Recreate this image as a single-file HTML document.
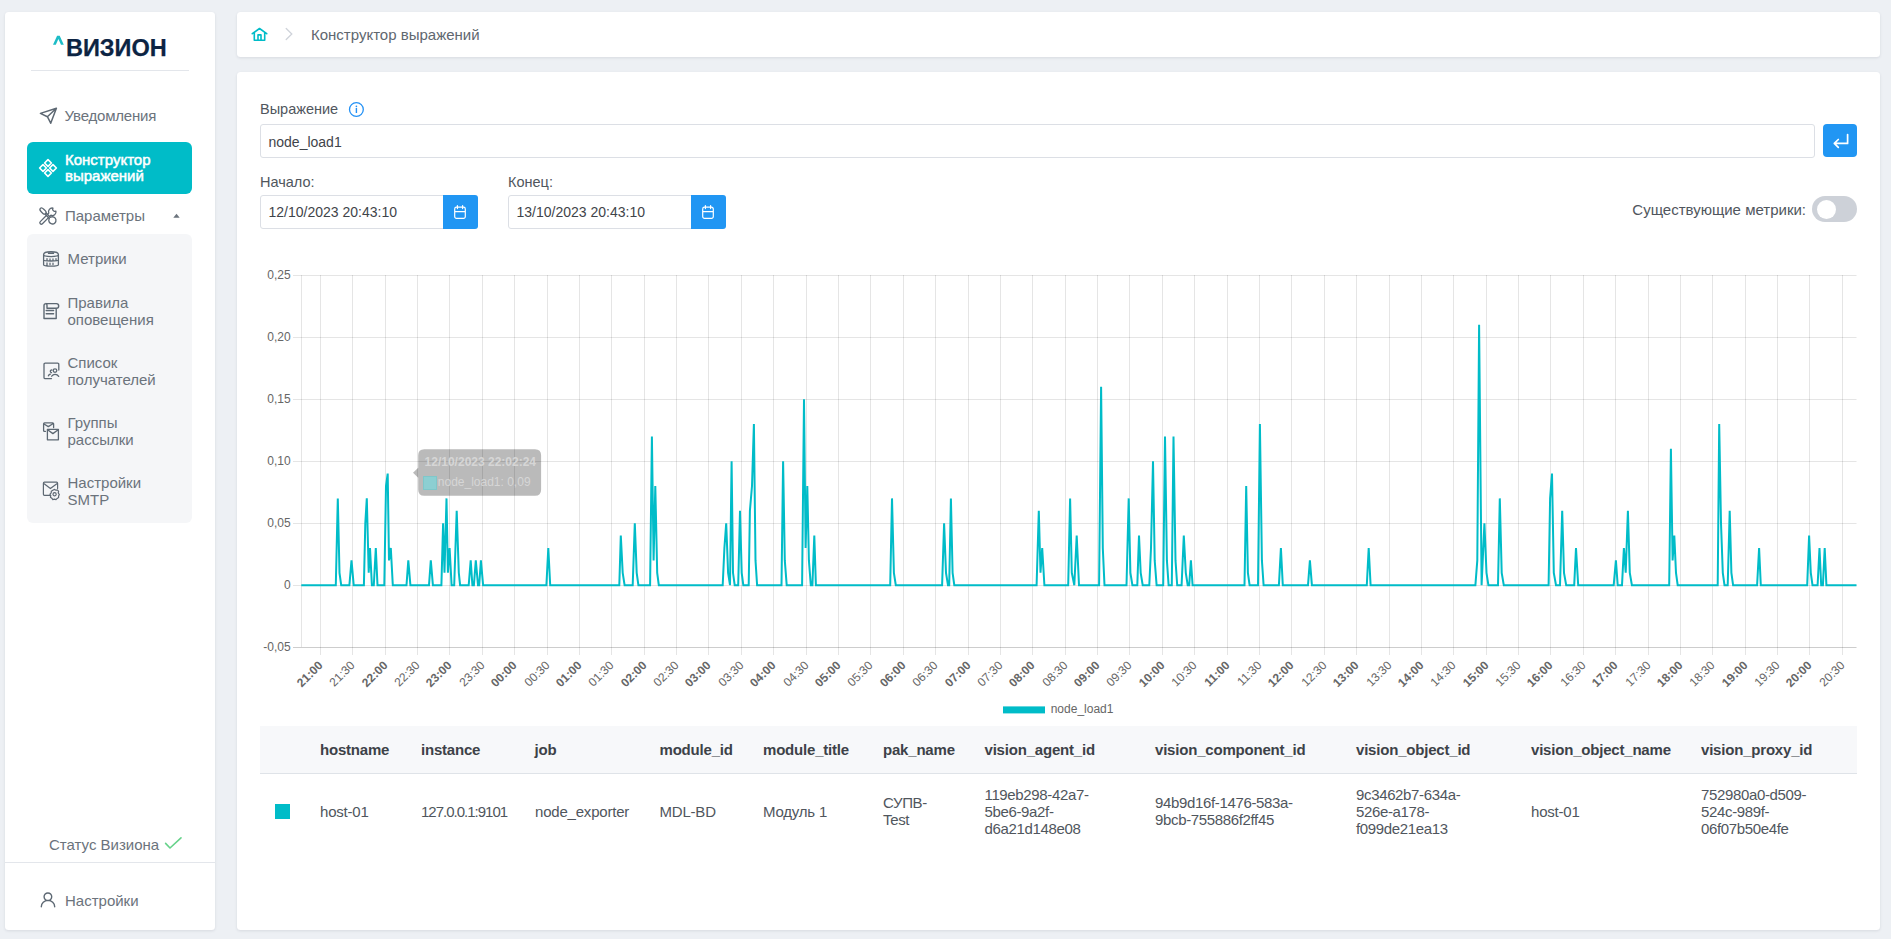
<!DOCTYPE html>
<html><head><meta charset="utf-8"><title>Конструктор выражений</title>
<style>
*{box-sizing:border-box}
html,body{margin:0;padding:0}
body{width:1891px;height:939px;overflow:hidden;background:#edf0f4;position:relative;font-family:"Liberation Sans", sans-serif}
.card{position:absolute;background:#fff;border-radius:3.5px;box-shadow:0 1px 3px rgba(20,30,50,0.10)}
.t{position:absolute;white-space:nowrap}
.abs{position:absolute}
svg.chart{position:absolute;left:0;top:0}
.cl{font-family:"Liberation Sans", sans-serif;font-size:12px;fill:#666}
.cl.b{font-weight:700}
</style></head>
<body>
<div class="card" style="left:5px;top:12px;width:210px;height:918px"></div>
<div class="card" style="left:237px;top:12px;width:1643px;height:45px"></div>
<div class="card" style="left:237px;top:72px;width:1643px;height:858px"></div>
<svg class="abs" style="left:50px;top:33px" width="16" height="14" viewBox="50 33 16 14"><path d="M53 44.8L57.1 35.7H59.7L63.8 44.8H61L58.4 38.9L55.8 44.8Z" fill="#1cbcc6"/></svg>
<div class="t" style="left:66px;top:33.65px;font-size:23.5px;line-height:28px;color:#0c2443;font-weight:700;letter-spacing:0px;-webkit-text-stroke:0.25px #0c2443">ВИЗИОН</div>
<div class="abs" style="left:31px;top:70px;width:158px;height:1px;background:#e3e6eb"></div>
<svg class="abs" style="left:36px;top:102px" width="26" height="26" viewBox="36 102 26 26"><path d="M40.4 113.4L56.4 108.2L50.7 123.2L47.4 116.7Z M47.4 116.7L56.4 108.2" fill="none" stroke="#5d6873" stroke-width="1.5" stroke-linejoin="round" stroke-linecap="round"/></svg>
<div class="t" style="left:64.6px;top:107.30px;font-size:15px;line-height:18px;color:#6b737c;font-weight:400;letter-spacing:-0.2px">Уведомления</div>
<div class="abs" style="left:27px;top:142px;width:165px;height:52px;background:#00bcc8;border-radius:6px"></div>
<svg class="abs" style="left:36px;top:155px" width="26" height="26" viewBox="36 155 26 26"><path d="M48 159.6L51.4 163L48 166.4L44.6 163ZM43 164.6L46.4 168L43 171.4L39.6 168ZM53 164.6L56.4 168L53 171.4L49.6 168ZM48 169.6L51.4 173L48 176.4L44.6 173Z" fill="none" stroke="#fff" stroke-width="1.6" stroke-linejoin="round"/></svg>
<div class="t" style="left:65px;top:151.80px;font-size:15px;line-height:16.6px;color:#fff;font-weight:400;-webkit-text-stroke:0.5px #fff">Конструктор<br>выражений</div>
<svg class="abs" style="left:36px;top:203px" width="26" height="26" viewBox="36 203 26 26"><g fill="none" stroke="#5d6873" stroke-width="1.3" stroke-linejoin="round" stroke-linecap="round"><g transform="rotate(45 48 216)"><path d="M37.2 216Q37.2 214.2 40.2 214.2H42.6Q43.6 214.2 44.6 215.2V216.8Q43.6 217.8 42.6 217.8H40.2Q37.2 217.8 37.2 216Z"/><path d="M44.6 215.2H50.4M44.6 216.8H50.4"/><path d="M50.7 215.1A3.6 3.6 0 1 1 50.7 216.9"/></g><g transform="rotate(-45 48 216)"><path d="M47.2 214.5H38.6Q37.1 214.5 37.1 216Q37.1 217.5 38.6 217.5H47.2"/><path d="M47.2 214.5L50.6 214.5A3.7 3.7 0 0 1 57.1 213.9L55.6 214.9V217.1L57.1 218.1A3.7 3.7 0 0 1 50.6 217.5L47.2 217.5"/></g></g></svg>
<div class="t" style="left:65px;top:206.80px;font-size:15px;line-height:18px;color:#6b737c;font-weight:400;">Параметры</div>
<svg class="abs" style="left:172px;top:212px" width="9" height="7" viewBox="0 0 9 7"><path d="M1.3 5.8L4.5 1.8L7.7 5.8Z" fill="#6b737c"/></svg>
<div class="abs" style="left:27px;top:234px;width:165px;height:289px;background:#f5f6f8;border-radius:6px"></div>
<svg class="abs" style="left:38px;top:246px" width="26" height="26" viewBox="38 246 26 26"><path d="M43.6 254.5C43.6 250.8 58.4 250.8 58.4 254.5V264.8C58.4 266.6 43.6 266.6 43.6 264.8ZM43.6 254.5C43.6 257.3 58.4 257.3 58.4 254.5M43.6 259.8C43.6 261.4 58.4 261.4 58.4 259.8M48.5 253.4H53.5M47 258.6V260.2M50 259V260.6M53 259V260.6M56 258.6V260.2M47 263V265.3M50 263.2V264.6M53 263.2V264.6" fill="none" stroke="#5d6873" stroke-width="1.3" stroke-linecap="round" stroke-linejoin="round"/></svg>
<svg class="abs" style="left:38px;top:298px" width="26" height="26" viewBox="38 298 26 26"><path d="M46 303.6H56.4A2.3 2.3 0 0 1 56.4 308.2H47M46 303.6A2 2 0 0 0 44 305.6V318.5H56.2V308.2M46 303.6A1.8 1.8 0 0 1 47 305.6V308.2M46.2 310.5H53.6M46.2 313.8H53.6" fill="none" stroke="#5d6873" stroke-width="1.4" stroke-linecap="round" stroke-linejoin="round"/></svg>
<svg class="abs" style="left:38px;top:358px" width="26" height="26" viewBox="38 358 26 26"><path d="M51.5 378.6H45.2A1.2 1.2 0 0 1 44 377.4V364.4A1.2 1.2 0 0 1 45.2 363.2H57.6A1.2 1.2 0 0 1 58.8 364.4V370M55 368.8A1.6 1.6 0 1 1 55 372.4A1.6 1.6 0 1 1 55 368.8ZM51.8 370A1.2 1.2 0 1 0 51.5 372.6M48.4 375.8Q49 374.4 50.4 374.2M51.7 376.2Q53 374.4 55 374.4Q57.5 374.4 58.7 376.4" fill="none" stroke="#5d6873" stroke-width="1.3" stroke-linecap="round" stroke-linejoin="round"/></svg>
<svg class="abs" style="left:38px;top:418px" width="26" height="26" viewBox="38 418 26 26"><path d="M45.4 431.4H44.8A1 1 0 0 1 43.6 430.4V423.8A1 1 0 0 1 44.6 422.8H52.6A1 1 0 0 1 53.6 423.8V427.6M44 424L48.3 426.6L52.5 424M47.4 429.3H58.4V439.8H47.4ZM47.6 429.8L52.9 433.6L58.2 429.8" fill="none" stroke="#5d6873" stroke-width="1.3" stroke-linecap="round" stroke-linejoin="round"/></svg>
<svg class="abs" style="left:38px;top:478px" width="26" height="26" viewBox="38 478 26 26"><path d="M50.6 495.3H44.4A1 1 0 0 1 43.4 494.3V483.2A1 1 0 0 1 44.4 482.2H56.6A1 1 0 0 1 57.6 483.2V488.6M43.8 483.6L50.4 488.6L57.2 483.6M54.6 489.4L56 490.2L57.6 490L58.6 491.4L58.2 493L59.3 494.4L58.6 496L58.6 497.6L57.2 498.4L56 499.6L54.4 499.2L52.8 499.6L51.8 498.2L50.4 497.2L50.8 495.6L50 494.2L51.2 492.8L51.3 491.2L52.8 490.2ZM54.6 492.6A1.6 1.6 0 1 1 54.6 495.8A1.6 1.6 0 1 1 54.6 492.6Z" fill="none" stroke="#5d6873" stroke-width="1.2" stroke-linecap="round" stroke-linejoin="round"/></svg>
<div class="t" style="left:67.5px;top:249.80px;font-size:15px;line-height:18px;color:#6b737c;font-weight:400;">Метрики</div>
<div class="t" style="left:67.5px;top:294.30px;font-size:15px;line-height:17px;color:#6b737c;font-weight:400;">Правила<br>оповещения</div>
<div class="t" style="left:67.5px;top:354.30px;font-size:15px;line-height:17px;color:#6b737c;font-weight:400;">Список<br>получателей</div>
<div class="t" style="left:67.5px;top:414.30px;font-size:15px;line-height:17px;color:#6b737c;font-weight:400;">Группы<br>рассылки</div>
<div class="t" style="left:67.5px;top:474.30px;font-size:15px;line-height:17px;color:#6b737c;font-weight:400;">Настройки<br>SMTP</div>
<div class="t" style="left:49px;top:835.50px;font-size:15px;line-height:18px;color:#6b737c;font-weight:400;">Статус Визиона</div>
<svg class="abs" style="left:162px;top:834px" width="22" height="18" viewBox="162 834 22 18"><path d="M165.6 843.4L170 848L181 837.8" fill="none" stroke="#66d28a" stroke-width="1.6" stroke-linecap="round" stroke-linejoin="round"/></svg>
<div class="abs" style="left:5px;top:862px;width:210px;height:1px;background:#e3e6eb"></div>
<svg class="abs" style="left:36px;top:888px" width="24" height="24" viewBox="36 888 24 24"><path d="M47.9 893A3.8 3.8 0 1 1 47.9 900.6A3.8 3.8 0 1 1 47.9 893Z M41.3 906.8A6.7 6.4 0 0 1 54.7 906.8" fill="none" stroke="#5d6873" stroke-width="1.4" stroke-linecap="round"/></svg>
<div class="t" style="left:65px;top:891.80px;font-size:15px;line-height:18px;color:#6b737c;font-weight:400;">Настройки</div>
<svg class="abs" style="left:248px;top:24px" width="22" height="22" viewBox="248 24 22 22"><path d="M252.3 33.7L259.5 28.5L266.7 33.7M254.3 32.6V40.3H264.7V32.6M258 40.3V34.9H261V40.3" fill="none" stroke="#00bcc8" stroke-width="1.6" stroke-linejoin="round" stroke-linecap="round"/></svg>
<svg class="abs" style="left:282px;top:26px" width="14" height="18" viewBox="282 26 14 18"><path d="M286.2 28.5L291.8 34L286.2 39.5" fill="none" stroke="#cfd3da" stroke-width="1.3" stroke-linecap="round"/></svg>
<div class="t" style="left:311px;top:25.90px;font-size:15px;line-height:18px;color:#60676f;font-weight:400;">Конструктор выражений</div>
<div class="t" style="left:260px;top:101.27px;font-size:14.5px;line-height:17px;color:#50565d;font-weight:400;">Выражение</div>
<svg class="abs" style="left:346px;top:100px" width="20" height="20" viewBox="346 100 20 20"><circle cx="356.4" cy="109.5" r="6.9" fill="none" stroke="#2391f5" stroke-width="1.3"/><path d="M356.4 108V113" stroke="#2391f5" stroke-width="1.4"/><circle cx="356.4" cy="106.3" r="0.85" fill="#2391f5"/></svg>
<div class="abs" style="left:260px;top:124px;width:1555px;height:34px;border:1px solid #dcdfe5;border-radius:3px"></div>
<div class="t" style="left:268.5px;top:133.65px;font-size:14px;line-height:17px;color:#3f444a;font-weight:400;">node_load1</div>
<div class="abs" style="left:1823px;top:124px;width:34px;height:33px;background:#2196f3;border-radius:4px"></div>
<svg class="abs" style="left:1828px;top:130px" width="24" height="22" viewBox="1828 130 24 22"><path d="M1847.6 134.6V143.4H1834.4M1838.3 139.5L1834.3 143.4L1838.3 147.3" fill="none" stroke="#fff" stroke-width="1.7" stroke-linecap="round" stroke-linejoin="round"/></svg>
<div class="t" style="left:260px;top:174.27px;font-size:14.5px;line-height:17px;color:#50565d;font-weight:400;">Начало:</div>
<div class="t" style="left:508px;top:174.27px;font-size:14.5px;line-height:17px;color:#50565d;font-weight:400;">Конец:</div>
<div class="abs" style="left:260px;top:195px;width:184px;height:34px;border:1px solid #dcdfe5;border-radius:3px 0 0 3px"></div>
<div class="t" style="left:268.5px;top:203.65px;font-size:14px;line-height:17px;color:#3f444a;font-weight:400;">12/10/2023 20:43:10</div>
<div class="abs" style="left:443px;top:195px;width:35px;height:34px;background:#2196f3;border-radius:0 3px 3px 0"></div>
<svg class="abs" style="left:443px;top:195px" width="35" height="34" viewBox="443 195 35 34"><path d="M454.7 209A1.8 1.8 0 0 1 456.5 207.2H463.5A1.8 1.8 0 0 1 465.3 209V216.6A1.8 1.8 0 0 1 463.5 218.4H456.5A1.8 1.8 0 0 1 454.7 216.6ZM454.7 211.6H465.3M457.4 205.6V208.6M462.6 205.6V208.6" fill="none" stroke="#fff" stroke-width="1.2" stroke-linecap="round"/></svg>
<div class="abs" style="left:508px;top:195px;width:184px;height:34px;border:1px solid #dcdfe5;border-radius:3px 0 0 3px"></div>
<div class="t" style="left:516.5px;top:203.65px;font-size:14px;line-height:17px;color:#3f444a;font-weight:400;">13/10/2023 20:43:10</div>
<div class="abs" style="left:691px;top:195px;width:35px;height:34px;background:#2196f3;border-radius:0 3px 3px 0"></div>
<svg class="abs" style="left:691px;top:195px" width="35" height="34" viewBox="691 195 35 34"><path d="M702.7 209A1.8 1.8 0 0 1 704.5 207.2H711.5A1.8 1.8 0 0 1 713.3 209V216.6A1.8 1.8 0 0 1 711.5 218.4H704.5A1.8 1.8 0 0 1 702.7 216.6ZM702.7 211.6H713.3M705.4 205.6V208.6M710.6 205.6V208.6" fill="none" stroke="#fff" stroke-width="1.2" stroke-linecap="round"/></svg>
<div class="t" style="right:85px;top:199.50px;font-size:15px;line-height:20px;color:#50565d">Существующие метрики:</div>
<div class="abs" style="left:1812px;top:196px;width:45px;height:26px;background:#cdd1d8;border-radius:13px"></div>
<div class="abs" style="left:1816.5px;top:199.5px;width:19px;height:19px;background:#fff;border-radius:50%"></div>
<svg class="chart" width="1891" height="939" viewBox="0 0 1891 939">
<path d="M293 275.5H1856.5M293 337.5H1856.5M293 399.5H1856.5M293 461.5H1856.5M293 523.5H1856.5M293 585.5H1856.5M293 647.5H1856.5M301.5 275V647M320.5 275V655M352.5 275V655M385.5 275V655M417.5 275V655M449.5 275V655M482.5 275V655M514.5 275V655M547.5 275V655M579.5 275V655M611.5 275V655M644.5 275V655M676.5 275V655M708.5 275V655M741.5 275V655M773.5 275V655M806.5 275V655M838.5 275V655M870.5 275V655M903.5 275V655M935.5 275V655M968.5 275V655M1000.5 275V655M1032.5 275V655M1065.5 275V655M1097.5 275V655M1129.5 275V655M1162.5 275V655M1194.5 275V655M1227.5 275V655M1259.5 275V655M1291.5 275V655M1324.5 275V655M1356.5 275V655M1389.5 275V655M1421.5 275V655M1453.5 275V655M1486.5 275V655M1518.5 275V655M1550.5 275V655M1583.5 275V655M1615.5 275V655M1648.5 275V655M1680.5 275V655M1712.5 275V655M1745.5 275V655M1777.5 275V655M1809.5 275V655M1842.5 275V655" stroke="rgba(0,0,0,0.1)" stroke-width="1" fill="none"/>
<path d="M293 647.5H1856.5" stroke="rgba(0,0,0,0.1)" stroke-width="1" fill="none"/>
<text x="290.6" y="279.1" text-anchor="end" class="cl">0,25</text>
<text x="290.6" y="341.1" text-anchor="end" class="cl">0,20</text>
<text x="290.6" y="403.1" text-anchor="end" class="cl">0,15</text>
<text x="290.6" y="465.1" text-anchor="end" class="cl">0,10</text>
<text x="290.6" y="527.1" text-anchor="end" class="cl">0,05</text>
<text x="290.6" y="589.1" text-anchor="end" class="cl">0</text>
<text x="290.6" y="651.1" text-anchor="end" class="cl">-0,05</text>
<text transform="translate(323.5,666) rotate(-45)" text-anchor="end" class="cl b">21:00</text>
<text transform="translate(355.5,666) rotate(-45)" text-anchor="end" class="cl">21:30</text>
<text transform="translate(388.5,666) rotate(-45)" text-anchor="end" class="cl b">22:00</text>
<text transform="translate(420.5,666) rotate(-45)" text-anchor="end" class="cl">22:30</text>
<text transform="translate(452.5,666) rotate(-45)" text-anchor="end" class="cl b">23:00</text>
<text transform="translate(485.5,666) rotate(-45)" text-anchor="end" class="cl">23:30</text>
<text transform="translate(517.5,666) rotate(-45)" text-anchor="end" class="cl b">00:00</text>
<text transform="translate(550.5,666) rotate(-45)" text-anchor="end" class="cl">00:30</text>
<text transform="translate(582.5,666) rotate(-45)" text-anchor="end" class="cl b">01:00</text>
<text transform="translate(614.5,666) rotate(-45)" text-anchor="end" class="cl">01:30</text>
<text transform="translate(647.5,666) rotate(-45)" text-anchor="end" class="cl b">02:00</text>
<text transform="translate(679.5,666) rotate(-45)" text-anchor="end" class="cl">02:30</text>
<text transform="translate(711.5,666) rotate(-45)" text-anchor="end" class="cl b">03:00</text>
<text transform="translate(744.5,666) rotate(-45)" text-anchor="end" class="cl">03:30</text>
<text transform="translate(776.5,666) rotate(-45)" text-anchor="end" class="cl b">04:00</text>
<text transform="translate(809.5,666) rotate(-45)" text-anchor="end" class="cl">04:30</text>
<text transform="translate(841.5,666) rotate(-45)" text-anchor="end" class="cl b">05:00</text>
<text transform="translate(873.5,666) rotate(-45)" text-anchor="end" class="cl">05:30</text>
<text transform="translate(906.5,666) rotate(-45)" text-anchor="end" class="cl b">06:00</text>
<text transform="translate(938.5,666) rotate(-45)" text-anchor="end" class="cl">06:30</text>
<text transform="translate(971.5,666) rotate(-45)" text-anchor="end" class="cl b">07:00</text>
<text transform="translate(1003.5,666) rotate(-45)" text-anchor="end" class="cl">07:30</text>
<text transform="translate(1035.5,666) rotate(-45)" text-anchor="end" class="cl b">08:00</text>
<text transform="translate(1068.5,666) rotate(-45)" text-anchor="end" class="cl">08:30</text>
<text transform="translate(1100.5,666) rotate(-45)" text-anchor="end" class="cl b">09:00</text>
<text transform="translate(1132.5,666) rotate(-45)" text-anchor="end" class="cl">09:30</text>
<text transform="translate(1165.5,666) rotate(-45)" text-anchor="end" class="cl b">10:00</text>
<text transform="translate(1197.5,666) rotate(-45)" text-anchor="end" class="cl">10:30</text>
<text transform="translate(1230.5,666) rotate(-45)" text-anchor="end" class="cl b">11:00</text>
<text transform="translate(1262.5,666) rotate(-45)" text-anchor="end" class="cl">11:30</text>
<text transform="translate(1294.5,666) rotate(-45)" text-anchor="end" class="cl b">12:00</text>
<text transform="translate(1327.5,666) rotate(-45)" text-anchor="end" class="cl">12:30</text>
<text transform="translate(1359.5,666) rotate(-45)" text-anchor="end" class="cl b">13:00</text>
<text transform="translate(1392.5,666) rotate(-45)" text-anchor="end" class="cl">13:30</text>
<text transform="translate(1424.5,666) rotate(-45)" text-anchor="end" class="cl b">14:00</text>
<text transform="translate(1456.5,666) rotate(-45)" text-anchor="end" class="cl">14:30</text>
<text transform="translate(1489.5,666) rotate(-45)" text-anchor="end" class="cl b">15:00</text>
<text transform="translate(1521.5,666) rotate(-45)" text-anchor="end" class="cl">15:30</text>
<text transform="translate(1553.5,666) rotate(-45)" text-anchor="end" class="cl b">16:00</text>
<text transform="translate(1586.5,666) rotate(-45)" text-anchor="end" class="cl">16:30</text>
<text transform="translate(1618.5,666) rotate(-45)" text-anchor="end" class="cl b">17:00</text>
<text transform="translate(1651.5,666) rotate(-45)" text-anchor="end" class="cl">17:30</text>
<text transform="translate(1683.5,666) rotate(-45)" text-anchor="end" class="cl b">18:00</text>
<text transform="translate(1715.5,666) rotate(-45)" text-anchor="end" class="cl">18:30</text>
<text transform="translate(1748.5,666) rotate(-45)" text-anchor="end" class="cl b">19:00</text>
<text transform="translate(1780.5,666) rotate(-45)" text-anchor="end" class="cl">19:30</text>
<text transform="translate(1812.5,666) rotate(-45)" text-anchor="end" class="cl b">20:00</text>
<text transform="translate(1845.5,666) rotate(-45)" text-anchor="end" class="cl">20:30</text>
<path d="M301.3 585.2 L335.8 585.2 L337.8 498.4 L339.5 572.8 L341.2 585.2 L349.4 585.2 L351.5 560.4 L353.7 585.2 L363.9 585.2 L365.3 523.2 L366.8 498.4 L368.7 572.8 L370.0 548.0 L371.9 585.2 L373.8 585.2 L375.8 548.0 L377.5 585.2 L384.3 585.2 L386.0 486.0 L387.7 473.6 L389.0 560.4 L390.8 548.0 L392.8 585.2 L406.5 585.2 L408.3 560.4 L410.4 585.2 L429.0 585.2 L430.8 560.4 L432.9 585.2 L441.4 585.2 L443.1 523.2 L444.5 572.8 L446.5 498.4 L447.9 572.8 L449.6 548.0 L451.6 585.2 L454.2 585.2 L456.7 510.8 L458.8 572.8 L460.1 585.2 L468.7 585.2 L470.7 560.4 L472.4 585.2 L473.9 585.2 L475.8 560.4 L478.0 585.2 L479.2 585.2 L480.9 560.4 L483.1 585.2 L546.4 585.2 L548.3 548.0 L550.2 585.2 L619.3 585.2 L620.8 535.6 L622.7 572.8 L624.6 585.2 L632.7 585.2 L634.8 523.2 L636.7 572.8 L638.4 585.2 L650.1 585.2 L651.9 436.4 L653.6 560.4 L655.3 486.0 L657.2 572.8 L658.8 585.2 L722.7 585.2 L724.4 548.0 L726.2 523.2 L728.1 572.8 L730.0 585.2 L731.6 461.2 L733.0 572.8 L734.7 585.2 L738.2 585.2 L740.0 510.8 L741.7 572.8 L743.3 585.2 L748.7 585.2 L749.9 510.8 L752.0 486.0 L753.9 424.0 L755.5 560.4 L757.1 585.2 L781.5 585.2 L783.1 461.2 L784.8 560.4 L786.7 585.2 L802.1 585.2 L804.0 399.2 L805.6 548.0 L807.3 486.0 L808.9 560.4 L810.8 585.2 L812.4 585.2 L814.3 535.6 L815.9 585.2 L890.2 585.2 L892.0 498.4 L893.9 572.8 L895.8 585.2 L942.1 585.2 L944.1 523.2 L946.0 572.8 L948.0 585.2 L949.2 585.2 L950.9 498.4 L952.6 572.8 L954.3 585.2 L1036.6 585.2 L1038.8 510.8 L1040.5 572.8 L1042.2 548.0 L1044.4 585.2 L1068.2 585.2 L1070.1 498.4 L1071.8 572.8 L1074.3 585.2 L1076.7 535.6 L1079.0 585.2 L1099.1 585.2 L1101.1 386.8 L1102.8 548.0 L1104.5 585.2 L1126.5 585.2 L1128.7 498.4 L1130.4 572.8 L1132.4 585.2 L1137.3 585.2 L1139.0 535.6 L1140.7 572.8 L1142.7 585.2 L1149.3 585.2 L1151.0 548.0 L1153.0 461.2 L1154.7 560.4 L1156.6 585.2 L1163.2 585.2 L1165.0 436.4 L1166.9 560.4 L1168.6 585.2 L1171.8 585.2 L1173.5 436.4 L1175.5 560.4 L1177.2 585.2 L1181.6 585.2 L1183.8 535.6 L1185.8 572.8 L1187.7 585.2 L1189.2 585.2 L1190.9 560.4 L1192.6 585.2 L1244.5 585.2 L1246.2 486.0 L1247.9 572.8 L1249.6 585.2 L1258.0 585.2 L1259.9 424.0 L1261.9 560.4 L1263.6 585.2 L1278.9 585.2 L1280.9 548.0 L1282.8 585.2 L1308.0 585.2 L1309.9 560.4 L1311.9 585.2 L1366.8 585.2 L1368.7 548.0 L1370.6 585.2 L1475.4 585.2 L1477.3 560.4 L1479.1 324.8 L1481.6 585.2 L1484.4 523.2 L1486.5 572.8 L1488.4 585.2 L1498.0 585.2 L1499.8 498.4 L1501.7 572.8 L1503.8 585.2 L1548.6 585.2 L1550.1 498.4 L1552.0 473.6 L1553.8 572.8 L1556.0 585.2 L1560.0 585.2 L1562.2 510.8 L1564.0 572.8 L1566.2 585.2 L1574.2 585.2 L1576.0 548.0 L1578.2 585.2 L1613.7 585.2 L1615.9 560.4 L1617.7 585.2 L1622.0 585.2 L1623.9 548.0 L1625.7 572.8 L1627.9 510.8 L1629.8 572.8 L1631.9 585.2 L1669.2 585.2 L1670.9 448.8 L1672.6 560.4 L1674.3 535.6 L1676.0 572.8 L1677.7 585.2 L1717.7 585.2 L1719.2 424.0 L1721.0 523.2 L1722.8 572.8 L1724.5 585.2 L1727.7 585.2 L1729.7 510.8 L1731.4 572.8 L1733.1 585.2 L1757.1 585.2 L1759.1 548.0 L1760.8 585.2 L1807.2 585.2 L1809.1 535.6 L1810.8 572.8 L1812.5 585.2 L1817.6 585.2 L1819.5 548.0 L1821.2 585.2 L1822.9 585.2 L1824.7 548.0 L1826.4 585.2 L1856.5 585.2" stroke="#00bcc8" stroke-width="2" fill="none" stroke-linejoin="miter"/>
<rect x="1003" y="706.4" width="42" height="7" fill="#00bcc8"/>
<text x="1050.7" y="712.8" class="cl">node_load1</text>
<path d="M424.2 449.2H535.1Q541.1 449.2 541.1 455.2V489.8Q541.1 495.8 535.1 495.8H424.2Q418.2 495.8 418.2 489.8V477.7L413 472.7L418.2 467.7V455.2Q418.2 449.2 424.2 449.2Z" fill="rgba(0,0,0,0.27)"/>
<text x="424.6" y="466" class="cl b" style="fill:#d6d6d6">12/10/2023 22:02:24</text>
<rect x="423.5" y="476.5" width="13" height="13" fill="#8ccfd2" stroke="#7fc7ca" stroke-width="1"/>
<text x="437.8" y="485.7" class="cl" style="fill:#d6d6d6">node_load1: 0,09</text>
</svg>
<div class="abs" style="left:260px;top:726px;width:1597px;height:48px;background:#f7f8fa;border-bottom:1px solid #dfe3e8"></div>
<div class="t" style="left:320px;top:741.00px;font-size:15px;line-height:18px;color:#3d4248;font-weight:700;letter-spacing:-0.2px">hostname</div>
<div class="t" style="left:421px;top:741.00px;font-size:15px;line-height:18px;color:#3d4248;font-weight:700;letter-spacing:-0.2px">instance</div>
<div class="t" style="left:534.5px;top:741.00px;font-size:15px;line-height:18px;color:#3d4248;font-weight:700;letter-spacing:-0.2px">job</div>
<div class="t" style="left:659.5px;top:741.00px;font-size:15px;line-height:18px;color:#3d4248;font-weight:700;letter-spacing:-0.2px">module_id</div>
<div class="t" style="left:763px;top:741.00px;font-size:15px;line-height:18px;color:#3d4248;font-weight:700;letter-spacing:-0.2px">module_title</div>
<div class="t" style="left:883px;top:741.00px;font-size:15px;line-height:18px;color:#3d4248;font-weight:700;letter-spacing:-0.2px">pak_name</div>
<div class="t" style="left:984.5px;top:741.00px;font-size:15px;line-height:18px;color:#3d4248;font-weight:700;letter-spacing:-0.2px">vision_agent_id</div>
<div class="t" style="left:1155px;top:741.00px;font-size:15px;line-height:18px;color:#3d4248;font-weight:700;letter-spacing:-0.2px">vision_component_id</div>
<div class="t" style="left:1356px;top:741.00px;font-size:15px;line-height:18px;color:#3d4248;font-weight:700;letter-spacing:-0.2px">vision_object_id</div>
<div class="t" style="left:1531px;top:741.00px;font-size:15px;line-height:18px;color:#3d4248;font-weight:700;letter-spacing:-0.2px">vision_object_name</div>
<div class="t" style="left:1701px;top:741.00px;font-size:15px;line-height:18px;color:#3d4248;font-weight:700;letter-spacing:-0.2px">vision_proxy_id</div>
<div class="abs" style="left:275px;top:804px;width:15px;height:15px;background:#00bcc8"></div>
<div class="t" style="left:320px;top:803.00px;font-size:15px;line-height:18px;color:#50565d;font-weight:400;letter-spacing:-0.2px">host-01</div>
<div class="t" style="left:421px;top:803.00px;font-size:15px;line-height:18px;color:#50565d;font-weight:400;letter-spacing:-1px">127.0.0.1:9101</div>
<div class="t" style="left:535px;top:803.00px;font-size:15px;line-height:18px;color:#50565d;font-weight:400;letter-spacing:-0.2px">node_exporter</div>
<div class="t" style="left:659.5px;top:803.00px;font-size:15px;line-height:18px;color:#50565d;font-weight:400;letter-spacing:-0.2px">MDL-BD</div>
<div class="t" style="left:763px;top:803.00px;font-size:15px;line-height:18px;color:#50565d;font-weight:400;letter-spacing:-0.2px">Модуль 1</div>
<div class="t" style="left:1531px;top:803.00px;font-size:15px;line-height:18px;color:#50565d;font-weight:400;letter-spacing:-0.2px">host-01</div>
<div class="t" style="left:883px;top:794.20px;font-size:15px;line-height:17px;color:#50565d;font-weight:400;letter-spacing:-0.35px">СУПВ-<br>Test</div>
<div class="t" style="left:984.5px;top:785.70px;font-size:15px;line-height:17px;color:#50565d;font-weight:400;letter-spacing:-0.35px">119eb298-42a7-<br>5be6-9a2f-<br>d6a21d148e08</div>
<div class="t" style="left:1155px;top:794.20px;font-size:15px;line-height:17px;color:#50565d;font-weight:400;letter-spacing:-0.35px">94b9d16f-1476-583a-<br>9bcb-755886f2ff45</div>
<div class="t" style="left:1356px;top:785.70px;font-size:15px;line-height:17px;color:#50565d;font-weight:400;letter-spacing:-0.35px">9c3462b7-634a-<br>526e-a178-<br>f099de21ea13</div>
<div class="t" style="left:1701px;top:785.70px;font-size:15px;line-height:17px;color:#50565d;font-weight:400;letter-spacing:-0.35px">752980a0-d509-<br>524c-989f-<br>06f07b50e4fe</div>
</body></html>
